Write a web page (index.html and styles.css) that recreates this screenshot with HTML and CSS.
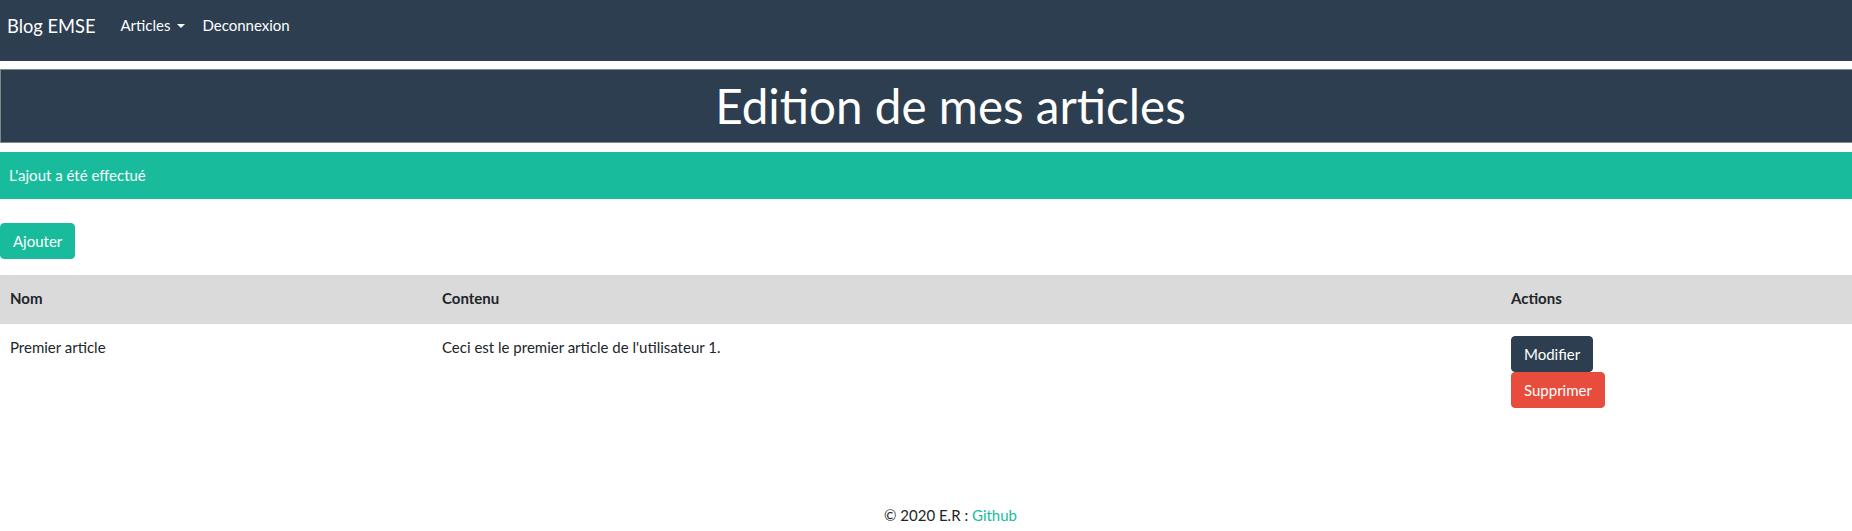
FILE: index.html
```html
<!DOCTYPE html>
<html lang="fr">
<head>
<meta charset="utf-8">
<title>Edition de mes articles</title>
<link rel="stylesheet" href="styles.css">
</head>
<body>
<nav class="navbar">
  <a class="brand" href="#">Blog EMSE</a>
  <ul class="nav">
    <li><a class="nav-link" href="#">Articles<span class="caret"></span></a></li>
    <li><a class="nav-link" href="#">Deconnexion</a></li>
  </ul>
</nav>
<div class="page">
  <header class="banner">
    <h1 class="title">Edition de mes articles</h1>
  </header>
  <div class="alert">L'ajout a été effectué</div>
  <div class="toolbar">
    <a class="btn btn-success" href="#">Ajouter</a>
  </div>
  <table class="table">
    <colgroup>
      <col class="col-name">
      <col class="col-content">
      <col class="col-actions">
    </colgroup>
    <thead>
      <tr><th>Nom</th><th>Contenu</th><th>Actions</th></tr>
    </thead>
    <tbody>
      <tr>
        <td>Premier article</td>
        <td>Ceci est le premier article de l'utilisateur 1.</td>
        <td>
          <div class="actions">
            <a class="btn btn-primary" href="#">Modifier</a>
            <a class="btn btn-danger" href="#">Supprimer</a>
          </div>
        </td>
      </tr>
    </tbody>
  </table>
  <footer class="footer">© 2020 E.R : <a href="#" class="link">Github</a></footer>
</div>
</body>
</html>
```
FILE: styles.css
```css
html, body {
  margin: 0;
  padding: 0;
}
body {
  font-family: Lato, "Open Sans", "Liberation Sans", sans-serif;
  font-size: 15px;
  line-height: 1.5;
  color: #212529;
  background: #fff;
  overflow-x: hidden;
}
a { text-decoration: none; }

.navbar {
  display: flex;
  align-items: center;
  box-sizing: border-box;
  height: 61px;
  padding: 0 7px 10px 7px;
  background: #2c3e50;
}
.brand {
  color: #fff;
  font-size: 18.3px;
  line-height: 30px;
  margin-right: 16px;
}
.nav {
  display: flex;
  list-style: none;
  margin: 0;
  padding: 0;
}
.nav-link {
  display: block;
  color: #fff;
  padding: 0 8px 0 9px;
  line-height: 22.5px;
}
.caret {
  display: inline-block;
  vertical-align: 3px;
  margin-left: 7px;
  border-top: 4px solid #fff;
  border-left: 4px solid transparent;
  border-right: 4px solid transparent;
}

.page {
  width: calc(100% + 49px);
}
.banner {
  margin-top: 8px;
  height: 74px;
  box-sizing: border-box;
  border: 1px solid #7b8a8b;
  background: #2c3e50;
  display: flex;
  align-items: center;
  justify-content: center;
}
.title {
  margin: 0;
  color: #fff;
  font-weight: 400;
  font-size: 47.6px;
  line-height: 1.2;
}
.alert {
  margin-top: 9px;
  height: 47px;
  box-sizing: border-box;
  padding: 0 9px;
  display: flex;
  align-items: center;
  background: #18bc9c;
  color: #fff;
}
.toolbar {
  padding: 24px 0 16px;
}
.btn {
  display: inline-block;
  padding: 6px 12px;
  line-height: 22px;
  border: 1px solid transparent;
  border-radius: 4px;
  color: #fff;
  font-size: 15px;
}
.btn-success { background: #18bc9c; border-color: #18bc9c; }
.btn-primary { background: #2c3e50; border-color: #2c3e50; }
.btn-danger { background: #e74c3c; border-color: #e74c3c; }

.table {
  width: 100%;
  border-collapse: collapse;
  table-layout: fixed;
}
.col-name { width: 432px; }
.col-content { width: 1069px; }
.table th, .table td {
  text-align: left;
  vertical-align: top;
  padding: 12px 10px;
  line-height: 22.5px;
}
.table thead th {
  background: #dadada;
  font-weight: 700;
  padding-bottom: 14.5px;
}
.actions {
  display: flex;
  flex-direction: column;
  align-items: flex-start;
}
.footer {
  text-align: center;
  padding-top: 84px;
}
.link { color: #18bc9c; }
```
